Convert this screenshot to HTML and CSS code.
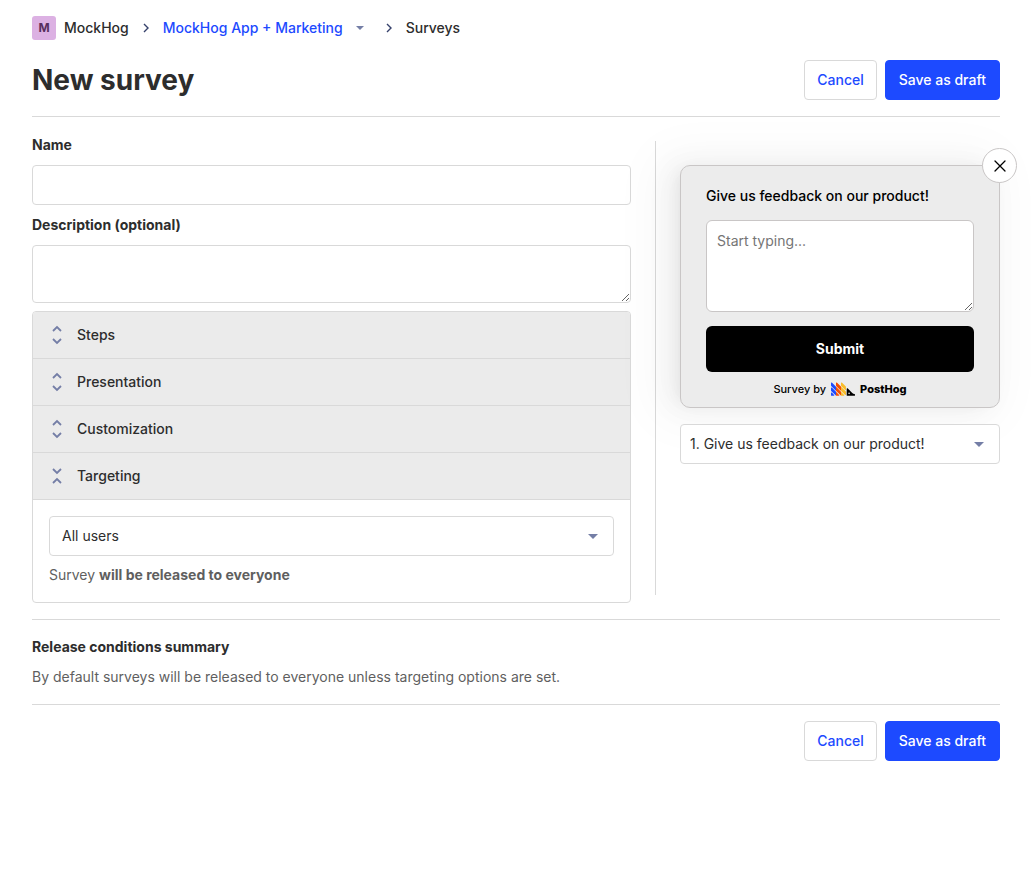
FILE: index.html
```html
<!DOCTYPE html>
<html lang="en">
<head>
<meta charset="utf-8">
<title>New survey</title>
<link rel="stylesheet" href="styles.css">
</head>
<body>
<svg class="defs" width="0" height="0" aria-hidden="true">
  <symbol id="chevron" viewBox="0 0 10 10"><path d="M3 1l4 4-4 4" fill="none" stroke="#35416b" stroke-width="1.4"/></symbol>
  <symbol id="caret" viewBox="0 0 10 5"><path d="M0 0h10L5 5z" fill="#747ea6"/></symbol>
  <symbol id="expand" viewBox="0 0 10 20"><path d="M1 6l4-4 4 4M1 14l4 4 4-4" fill="none" stroke="#747ea6" stroke-width="1.8"/></symbol>
  <symbol id="collapse" viewBox="0 0 10 20"><path d="M1 3l4 4 4-4M1 17l4-4 4 4" fill="none" stroke="#747ea6" stroke-width="1.8"/></symbol>
</svg>
<main class="page">
  <nav class="breadcrumbs" aria-label="Breadcrumb">
    <span class="lettermark">M</span>
    <span class="crumb">MockHog</span>
    <svg class="separator"><use href="#chevron"/></svg>
    <a class="crumb-link" href="#">MockHog App + Marketing</a>
    <button class="crumb-menu" type="button" aria-label="Switch project"><svg class="caret-small"><use href="#caret"/></svg></button>
    <svg class="separator"><use href="#chevron"/></svg>
    <span>Surveys</span>
  </nav>

  <header class="title-row">
    <h1 class="title">New survey</h1>
    <div class="actions">
      <button class="btn" type="button">Cancel</button>
      <button class="btn btn-primary" type="button">Save as draft</button>
    </div>
  </header>
  <hr class="rule">

  <div class="columns">
    <form class="form">
      <label class="label" for="name">Name</label>
      <input class="input" id="name" type="text">
      <label class="label" for="description">Description (optional)</label>
      <textarea class="input description" id="description"></textarea>
      <div class="accordion">
        <button class="panel-header" type="button" aria-expanded="false"><svg class="panel-icon"><use href="#expand"/></svg>Steps</button>
        <button class="panel-header" type="button" aria-expanded="false"><svg class="panel-icon"><use href="#expand"/></svg>Presentation</button>
        <button class="panel-header" type="button" aria-expanded="false"><svg class="panel-icon"><use href="#expand"/></svg>Customization</button>
        <button class="panel-header" type="button" aria-expanded="true"><svg class="panel-icon"><use href="#collapse"/></svg>Targeting</button>
        <div class="panel-body">
          <div class="select-wrap">
            <select class="select" aria-label="Targeting"><option>All users</option></select>
            <svg class="caret"><use href="#caret"/></svg>
          </div>
          <p class="muted">Survey <b>will be released to everyone</b></p>
        </div>
      </div>
    </form>

    <div class="divider"></div>

    <aside class="preview">
      <form class="popup">
        <button class="popup-close" type="button" aria-label="Close survey">
          <svg width="12" height="12" viewBox="0 0 12 12"><path d="M1 1l10 10M11 1L1 11" stroke="#000" stroke-width="1.3" stroke-linecap="round"/></svg>
        </button>
        <label class="question" for="answer">Give us feedback on our product!</label>
        <textarea class="answer" id="answer" placeholder="Start typing..."></textarea>
        <button class="submit" type="button">Submit</button>
        <a class="branding" href="#">Survey by
          <svg class="logo" viewBox="0 2 48 27" aria-hidden="true">
            <linearGradient id="stripes" gradientUnits="userSpaceOnUse" x1="0" y1="0" x2="30" y2="0">
              <stop offset=".3333" stop-color="#1d4aff"/><stop offset=".3333" stop-color="#f54e00"/>
              <stop offset=".6666" stop-color="#f54e00"/><stop offset=".6666" stop-color="#f9bd2b"/>
            </linearGradient>
            <path fill="url(#stripes)" d="M0 23.408c0-.89 1.077-1.337 1.707-.707l4.583 4.584c.63.63.184 1.707-.707 1.707H1a1 1 0 01-1-1v-4.584zm0-4.828a1 1 0 00.293.707l9.411 9.41a1 1 0 00.707.294h5.17c.89 0 1.336-1.077.706-1.707L1.707 12.705c-.63-.63-1.707-.184-1.707.707v5.168zm0-9.997a1 1 0 00.293.707L19.7 28.698a1 1 0 00.707.293h5.168c.891 0 1.337-1.077.707-1.707L1.707 2.708C1.077 2.078 0 2.524 0 3.415v5.168zm9.997 0a1 1 0 00.293.707l17.994 17.994c.63.63 1.707.184 1.707-.707v-5.168a1 1 0 00-.293-.707L11.704 2.708c-.63-.63-1.707-.184-1.707.707v5.168zm11.704-5.875c-.63-.63-1.707-.184-1.707.707v5.168a1 1 0 00.293.707l7.997 7.997c.63.63 1.707.184 1.707-.707v-5.168a1 1 0 00-.293-.707l-7.997-7.997z"/>
            <path d="M42.525 23.53l-9.413-9.412c-.63-.63-1.707-.184-1.707.707v13.166a1 1 0 001 1h14.58a1 1 0 001-1v-1.2c0-.552-.449-.993-.996-1.064a7.72 7.72 0 01-4.464-2.197zm-6.321 2.263a1.6 1.6 0 11.001-3.199 1.6 1.6 0 01-.001 3.199z"/>
          </svg>
          <span class="wordmark">PostHog</span>
        </a>
      </form>
      <div class="select-wrap">
        <select class="select select-preview" aria-label="Previewed question"><option>1. Give us feedback on our product!</option></select>
        <svg class="caret"><use href="#caret"/></svg>
      </div>
    </aside>
  </div>

  <hr class="rule">
  <section class="summary">
    <h2 class="label">Release conditions summary</h2>
    <p class="muted">By default surveys will be released to everyone unless targeting options are set.</p>
  </section>
  <hr class="rule">
  <footer class="actions">
    <button class="btn" type="button">Cancel</button>
    <button class="btn btn-primary" type="button">Save as draft</button>
  </footer>
</main>
</body>
</html>
```

FILE: styles.css
```css
* { box-sizing: border-box; }

body {
  margin: 0;
  background: #fff;
  color: #2d2d2d;
  font: 14px/22px Inter, sans-serif;
}

button, input, textarea, select { font: inherit; color: inherit; margin: 0; }
button { cursor: pointer; }
h1, h2, p { margin: 0; }
a { text-decoration: none; }

.defs { position: absolute; }

.page { padding: 16px 32px; }

.breadcrumbs { display: flex; align-items: center; height: 24px; font-weight: 500; }
.lettermark {
  display: grid;
  place-items: center;
  width: 24px;
  height: 24px;
  margin-right: 8px;
  border-radius: 3px;
  background: #dcb1e3;
  color: #572e5e;
  font-size: 12px;
  font-weight: 700;
}
.separator { width: 10px; height: 10px; margin: 0 12px; }
.crumb-link { color: #1d4aff; }
.crumb-menu {
  display: flex;
  padding: 8px;
  margin-left: 5px;
  border: 0;
  background: none;
}
.caret-small { width: 8px; height: 4px; }

.title-row {
  display: flex;
  align-items: center;
  justify-content: space-between;
  margin: 20px 0 16px;
}
.title { font-size: 28px; line-height: 40px; font-weight: 700; }

.actions { display: flex; justify-content: flex-end; gap: 8px; }
.btn {
  height: 40px;
  padding: 0 12px;
  border: 1px solid #d9d9d9;
  border-radius: 4px;
  background: #fff;
  color: #1d4aff;
  font-weight: 500;
}
.btn-primary { padding: 0 13px; border-color: #1d4aff; background: #1d4aff; color: #fff; }

.rule { margin: 16px 0; border: 0; border-top: 1px solid #d9d9d9; }

.columns { display: flex; gap: 24px; }
.form { display: flex; flex: 1; flex-direction: column; gap: 8px; min-width: 0; }
.label { font-size: 14px; line-height: 24px; font-weight: 700; }
.input {
  display: block;
  width: 100%;
  height: 40px;
  padding: 4px 12px;
  border: 1px solid #d9d9d9;
  border-radius: 4px;
  background: #fff;
}
.description { height: 58px; resize: vertical; }

.accordion { border: 1px solid #d9d9d9; border-radius: 4px; overflow: hidden; }
.panel-header {
  display: flex;
  align-items: center;
  gap: 15px;
  width: 100%;
  height: 47px;
  padding: 0 19px;
  border: 0;
  border-bottom: 1px solid #d9d9d9;
  background: #ebebeb;
  font-weight: 500;
}
.panel-icon { width: 10px; height: 20px; }
.panel-body { display: flex; flex-direction: column; gap: 8px; padding: 16px; }

.select-wrap { position: relative; }
.select {
  display: block;
  appearance: none;
  width: 100%;
  height: 40px;
  padding: 0 36px 0 12px;
  border: 1px solid #d9d9d9;
  border-radius: 4px;
  background: #fff;
}
.select-preview { padding-left: 9px; }
.caret {
  position: absolute;
  top: 18px;
  right: 16px;
  width: 10px;
  height: 5px;
  pointer-events: none;
}

.muted { color: #5f5f5f; }

.divider { width: 1px; margin: 8px 0; background: #d9d9d9; }

.preview { display: flex; flex-direction: column; gap: 16px; width: 320px; padding-top: 32px; }
.popup {
  position: relative;
  display: flex;
  flex-direction: column;
  padding: 20px 25px 8px;
  border: 1px solid #c9c6c6;
  border-radius: 10px;
  background: #ececec;
  color: #000;
  box-shadow: -6px 0 16px -8px rgba(0, 0, 0, .08), -9px 0 28px 0 rgba(0, 0, 0, .05), -12px 0 48px 16px rgba(0, 0, 0, .03);
}
.popup-close {
  position: absolute;
  top: -18px;
  right: -18px;
  display: grid;
  place-items: center;
  width: 35px;
  height: 35px;
  padding: 0;
  border: 1px solid #c9c6c6;
  border-radius: 50%;
  background: #fff;
}
.question { line-height: 20px; font-weight: 500; }
.answer {
  height: 92px;
  margin: 14px 0;
  padding: 10px;
  border: 1px solid #c9c6c6;
  border-radius: 6px;
  background: #fff;
  line-height: 20px;
  resize: vertical;
}
.answer::placeholder { color: #757575; }
.submit {
  height: 46px;
  border: 0;
  border-radius: 6px;
  background: #000;
  color: #fff;
  font-weight: 700;
}
.branding {
  display: flex;
  align-items: center;
  justify-content: center;
  gap: 5px;
  margin-top: 7px;
  color: #000;
  font-size: 11px;
  line-height: 20px;
  font-weight: 500;
}
.logo { width: 24px; height: 14px; }
.wordmark { font-weight: 800; }

.summary { display: flex; flex-direction: column; gap: 8px; }
.summary .label { line-height: 22px; }
```
